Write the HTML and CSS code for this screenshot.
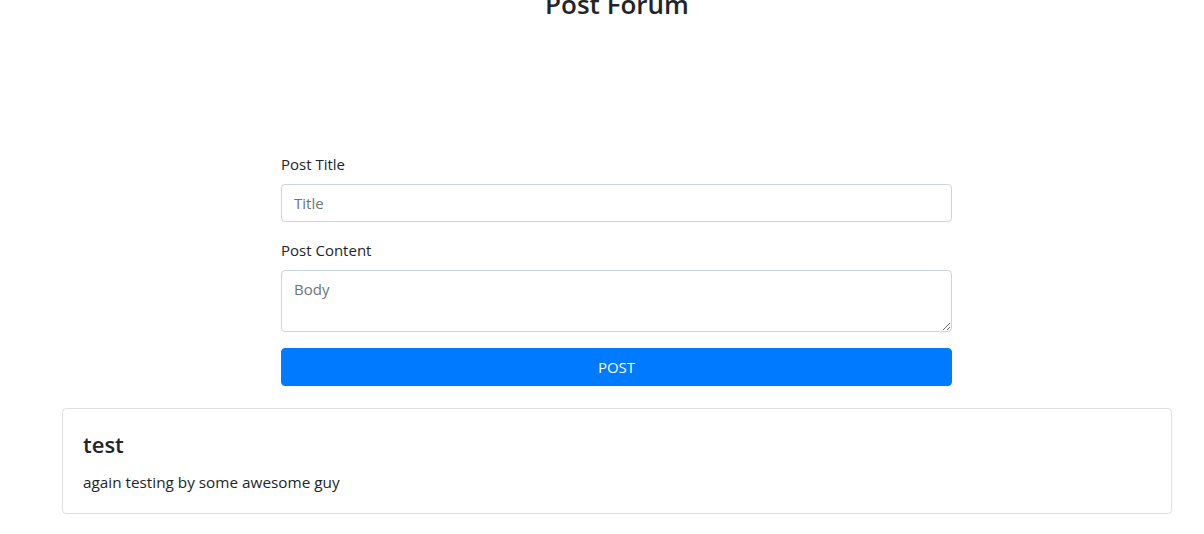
FILE: index.html
```html
<!DOCTYPE html>
<html>
<head>
<meta charset="utf-8">
<link rel="stylesheet" href="styles.css">
</head>
<body>
<div class="container">
  <h1 class="page-title">Post Forum</h1>
  <form class="post-form">
    <div class="form-group">
      <label class="form-label">Post Title</label>
      <input class="form-control" type="text" placeholder="Title">
    </div>
    <div class="form-group">
      <label class="form-label">Post Content</label>
      <textarea class="form-control textarea" placeholder="Body"></textarea>
    </div>
    <button class="btn-post" type="button">POST</button>
  </form>
  <div class="card">
    <h4 class="card-title">test</h4>
    <p class="card-text">again testing by some awesome guy</p>
  </div>
</div>
</body>
</html>
```

FILE: styles.css
```css
* { box-sizing: border-box; }
html, body { margin: 0; padding: 0; background: #fff; }
body {
  font-family: "Open Sans", "Noto Sans", sans-serif;
  font-size: 15px;
  line-height: 24px;
  color: #212529;
  overflow: hidden;
}
.container {
  width: 1110px;
  margin-left: 62px;
}
.page-title {
  margin: -13px 0 0 0;
  text-align: center;
  font-size: 26px;
  line-height: 34px;
  font-weight: 600;
}
.post-form {
  width: 671px;
  margin: 131px 0 0 219px;
}
.form-group { margin-bottom: 16px; }
.form-label {
  display: block;
  margin-bottom: 8px;
  line-height: 24px;
}
.form-control {
  display: block;
  width: 100%;
  height: 38px;
  padding: 6px 12px;
  font-family: inherit;
  font-size: 15px;
  line-height: 24px;
  color: #495057;
  background: #fff;
  border: 1px solid #ced4da;
  border-radius: 4px;
  outline: none;
}
.form-control::placeholder { color: #6c757d; }
.textarea {
  height: 62px;
  resize: vertical;
}
.btn-post {
  display: block;
  width: 100%;
  height: 38px;
  background: #007bff;
  color: #fff;
  border: 1px solid #007bff;
  border-radius: 4px;
  font-family: inherit;
  font-size: 15px;
  line-height: 24px;
  padding: 6px 12px;
}
.card {
  margin-top: 22px;
  border: 1px solid rgba(0,0,0,.125);
  border-radius: 4px;
  padding: 21px 20px 19px;
}
.card-title {
  margin: 0 0 12px;
  font-size: 22px;
  line-height: 28px;
  font-weight: 600;
}
.card-text {
  margin: 0;
  font-size: 15.3px;
}
```
